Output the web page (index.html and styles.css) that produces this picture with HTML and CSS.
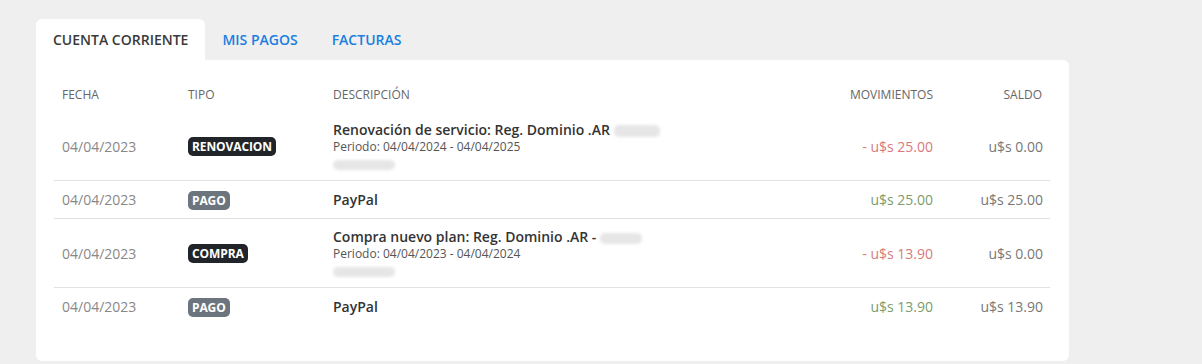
FILE: index.html
```html
<!DOCTYPE html>
<html lang="es">
<head>
<meta charset="utf-8">
<title>Cuenta corriente</title>
<link rel="stylesheet" href="styles.css">
</head>
<body>
<div class="page">
  <nav class="tabs">
    <a class="tab active">CUENTA CORRIENTE</a>
    <a class="tab">MIS PAGOS</a>
    <a class="tab">FACTURAS</a>
  </nav>
  <section class="card">
    <table class="ledger">
      <colgroup>
        <col class="c-date"><col class="c-type"><col class="c-desc"><col class="c-mov"><col class="c-bal">
      </colgroup>
      <thead>
        <tr>
          <th>FECHA</th>
          <th>TIPO</th>
          <th>DESCRIPCIÓN</th>
          <th class="num">MOVIMIENTOS</th>
          <th class="num">SALDO</th>
        </tr>
      </thead>
      <tbody>
        <tr>
          <td class="date">04/04/2023</td>
          <td><span class="badge dark">RENOVACION</span></td>
          <td class="desc">
            <div class="title">Renovación de servicio: Reg. Dominio .AR <span class="blur b-title1"></span></div>
            <div class="period">Periodo: 04/04/2024 - 04/04/2025</div>
            <div class="extra"><span class="blur b-line"></span></div>
          </td>
          <td class="num neg">- u$s 25.00</td>
          <td class="num bal">u$s 0.00</td>
        </tr>
        <tr>
          <td class="date">04/04/2023</td>
          <td><span class="badge grey">PAGO</span></td>
          <td class="desc"><div class="title single">PayPal</div></td>
          <td class="num pos">u$s 25.00</td>
          <td class="num bal">u$s 25.00</td>
        </tr>
        <tr>
          <td class="date">04/04/2023</td>
          <td><span class="badge dark">COMPRA</span></td>
          <td class="desc">
            <div class="title">Compra nuevo plan: Reg. Dominio .AR - <span class="blur b-title2"></span></div>
            <div class="period">Periodo: 04/04/2023 - 04/04/2024</div>
            <div class="extra"><span class="blur b-line"></span></div>
          </td>
          <td class="num neg">- u$s 13.90</td>
          <td class="num bal">u$s 0.00</td>
        </tr>
        <tr class="last">
          <td class="date">04/04/2023</td>
          <td><span class="badge grey">PAGO</span></td>
          <td class="desc"><div class="title single">PayPal</div></td>
          <td class="num pos">u$s 13.90</td>
          <td class="num bal">u$s 13.90</td>
        </tr>
      </tbody>
    </table>
  </section>
</div>
</body>
</html>
```

FILE: styles.css
```css
* { box-sizing: border-box; }
html, body { margin: 0; padding: 0; }
body {
  background: #efefef;
  font-family: "Open Sans", "Liberation Sans", sans-serif;
  color: #333;
}
.page {
  padding: 19px 36px 0 36px;
  width: 1105px;
}
.tabs {
  display: flex;
  height: 41px;
}
.tab {
  display: flex;
  align-items: center;
  padding: 0 17px;
  font-size: 14px;
  font-weight: 600;
  color: #1a7fe0;
  border-radius: 6px 6px 0 0;
  cursor: pointer;
}
.tab.active {
  background: #fff;
  color: #3a3a3a;
}
.card {
  background: #fff;
  border-radius: 0 6px 6px 6px;
  padding: 18px 19px 36px 18px;
  width: 1033px;
}
.ledger {
  width: 100%;
  border-collapse: collapse;
  table-layout: fixed;
}
.c-date { width: 126px; }
.c-type { width: 145px; }
.c-desc { width: 477px; }
.c-mov { width: 139px; }
.c-bal { width: 109px; }
th {
  text-align: left;
  font-size: 12px;
  font-weight: 400;
  color: #666;
  line-height: 18px;
  padding: 8px 8px;
}
th.num, td.num { text-align: right; }
td {
  padding: 8px 8px;
  border-bottom: 1px solid #e2e2e2;
  vertical-align: middle;
  font-size: 14px;
}
tr.last td { border-bottom: 0; }
td.date { color: #888; }
.badge {
  display: inline-block;
  font-size: 12px;
  font-weight: 700;
  color: #fff;
  line-height: 19px;
  padding: 0 4px;
  letter-spacing: -0.1px;
  border-radius: 5px;
}
.badge.dark { background: #212529; }
.badge.grey { background: #6c757d; }
.desc .title {
  font-weight: 600;
  color: #333;
  line-height: 19px;
}
.desc .title.single { line-height: 21px; }
.desc .period {
  font-size: 12px;
  color: #555;
  line-height: 16px;
}
.desc .extra { line-height: 17px; height: 17px; }
.blur {
  display: inline-block;
  background: #e6e6e6;
  filter: blur(1.5px);
  border-radius: 5px;
  vertical-align: middle;
}
.b-title1 { width: 46px; height: 12px; }
.b-title2 { width: 42px; height: 11px; }
.b-line { width: 62px; height: 10px; }
td.neg { color: #d97a7a; }
td.pos { color: #7c9c6c; }
td.bal { color: #777; padding-right: 7px; }
```
